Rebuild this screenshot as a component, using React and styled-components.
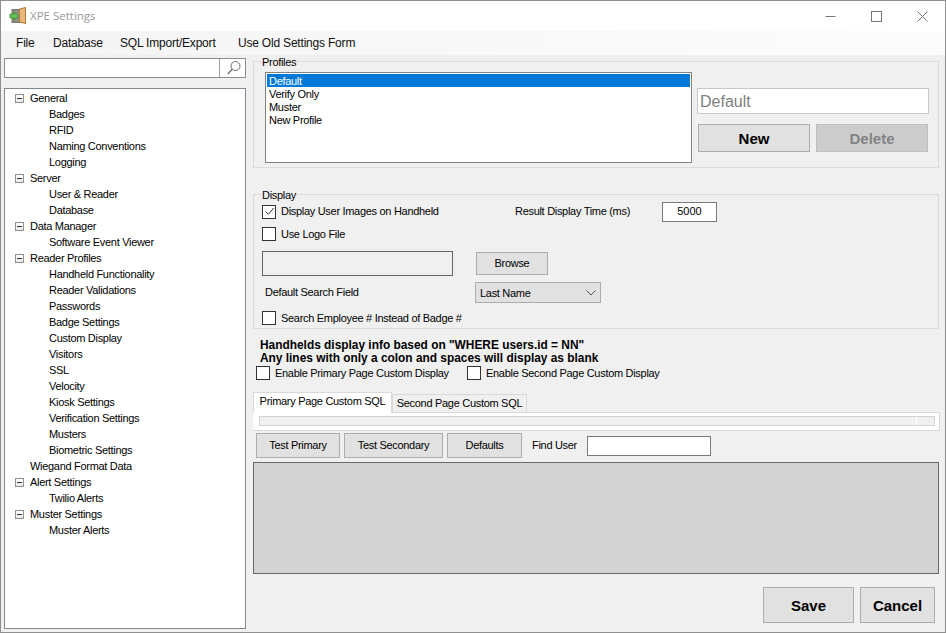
import styled, { createGlobalStyle } from "styled-components";

const GlobalStyle = createGlobalStyle`
  html, body {
    margin: 0;
    padding: 0;
    background: #f0f0f0;
  }
  * {
    box-sizing: border-box;
  }
`;

const treeItems = [
  { label: "General", level: 0, toggle: true },
  { label: "Badges", level: 1 },
  { label: "RFID", level: 1 },
  { label: "Naming Conventions", level: 1 },
  { label: "Logging", level: 1 },
  { label: "Server", level: 0, toggle: true },
  { label: "User & Reader", level: 1 },
  { label: "Database", level: 1 },
  { label: "Data Manager", level: 0, toggle: true },
  { label: "Software Event Viewer", level: 1 },
  { label: "Reader Profiles", level: 0, toggle: true },
  { label: "Handheld Functionality", level: 1 },
  { label: "Reader Validations", level: 1 },
  { label: "Passwords", level: 1 },
  { label: "Badge Settings", level: 1 },
  { label: "Custom Display", level: 1 },
  { label: "Visitors", level: 1 },
  { label: "SSL", level: 1 },
  { label: "Velocity", level: 1 },
  { label: "Kiosk Settings", level: 1 },
  { label: "Verification Settings", level: 1 },
  { label: "Musters", level: 1 },
  { label: "Biometric Settings", level: 1 },
  { label: "Wiegand Format Data", level: 0 },
  { label: "Alert Settings", level: 0, toggle: true },
  { label: "Twilio Alerts", level: 1 },
  { label: "Muster Settings", level: 0, toggle: true },
  { label: "Muster Alerts", level: 1 },
];

const profiles = ["Default", "Verify Only", "Muster", "New Profile"];
const menus = [
  { label: "File", width: 37 },
  { label: "Database", width: 67 },
  { label: "SQL Import/Export", width: 118 },
  { label: "Use Old Settings Form", width: 130 },
];

const AppIcon = () => (
  <svg width="18" height="18" viewBox="0 0 18 18">
    <rect x="3" y="2.5" width="8" height="13" fill="#8d9186" stroke="#5f6258" strokeWidth="0.8" />
    <path d="M10.5 2 L16.5 0.5 V16.5 L10.5 15 Z" fill="#e8b87c" stroke="#b5752c" strokeWidth="1" />
    <path d="M1 7 H5.5 V5 L9.5 9 L5.5 13 V11 H1 Z" fill="#62c254" stroke="#2f8a2a" strokeWidth="0.7" />
  </svg>
);

const SearchIcon = () => (
  <svg width="16" height="16" viewBox="0 0 16 16" fill="none" stroke="#6e6e6e" strokeWidth="1">
    <circle cx="10.5" cy="6" r="4.5" />
    <path d="M7.3 9.3 L2.8 14" strokeWidth="1.3" />
  </svg>
);

const CheckMark = () => (
  <svg width="11" height="11" viewBox="0 0 11 11" fill="none" stroke="#333" strokeWidth="1">
    <path d="M1.5 5.5 L4.3 8.3 L9.7 2" />
  </svg>
);

const Chevron = () => (
  <svg width="10" height="6" viewBox="0 0 10 6" fill="none" stroke="#555" strokeWidth="1">
    <path d="M0.5 0.5 L5 5 L9.5 0.5" />
  </svg>
);

const Check = ({ checked, label, width }) => (
  <CheckField $width={width}>
    <CheckBox>{checked && <CheckMark />}</CheckBox>
    <span>{label}</span>
  </CheckField>
);

const App = () => {
  return (
    <Window>
      <GlobalStyle />
      <TitleBar>
        <AppIcon />
        <WindowTitle>XPE Settings</WindowTitle>
        <Caption>
          <CaptionButton>
            <svg width="11" height="11" viewBox="0 0 11 11" stroke="#777" fill="none">
              <path d="M0.5 5.5 H10.5" />
            </svg>
          </CaptionButton>
          <CaptionButton>
            <svg width="11" height="11" viewBox="0 0 11 11" stroke="#777" fill="none">
              <rect x="0.5" y="0.5" width="10" height="10" />
            </svg>
          </CaptionButton>
          <CaptionButton>
            <svg width="11" height="11" viewBox="0 0 11 11" stroke="#777" fill="none">
              <path d="M0.5 0.5 L10.5 10.5 M10.5 0.5 L0.5 10.5" />
            </svg>
          </CaptionButton>
        </Caption>
      </TitleBar>

      <MenuBar>
        {menus.map((menu) => (
          <MenuItem key={menu.label} $width={menu.width}>
            {menu.label}
          </MenuItem>
        ))}
      </MenuBar>

      <Body>
        <Sidebar>
          <SearchBox>
            <SearchField />
            <SearchButton>
              <SearchIcon />
            </SearchButton>
          </SearchBox>
          <Tree>
            {treeItems.map((item) => (
              <TreeRow key={item.label} $level={item.level}>
                {item.toggle && (
                  <Toggle>
                    <i />
                  </Toggle>
                )}
                {item.label}
              </TreeRow>
            ))}
          </Tree>
        </Sidebar>

        <Content>
          <Group>
            <legend>Profiles</legend>
            <ProfilesRow>
              <ListBox>
                {profiles.map((profile, i) => (
                  <ListItem key={profile} $selected={i === 0}>
                    {profile}
                  </ListItem>
                ))}
              </ListBox>
              <ProfileEdit>
                <NameInput>Default</NameInput>
                <ProfileButtons>
                  <BoldButton $width={112} $height={28}>
                    New
                  </BoldButton>
                  <BoldButton $width={112} $height={28} $disabled>
                    Delete
                  </BoldButton>
                </ProfileButtons>
              </ProfileEdit>
            </ProfilesRow>
          </Group>

          <DisplayGroup>
            <legend>Display</legend>
            <FormRow $top={1} $height={21}>
              <Check checked label="Display User Images on Handheld" width={253} />
              <FieldLabel $width={147}>Result Display Time (ms)</FieldLabel>
              <NumberBox>5000</NumberBox>
            </FormRow>
            <FormRow $top={5} $height={14}>
              <Check label="Use Logo File" />
            </FormRow>
            <FormRow $top={10} $height={25}>
              <PathBox />
              <Button $width={72} $height={23} $left={23}>
                Browse
              </Button>
            </FormRow>
            <FormRow $top={6} $height={21}>
              <FieldLabel $width={210} $left={3}>
                Default Search Field
              </FieldLabel>
              <Select>
                <span>Last Name</span>
                <Chevron />
              </Select>
            </FormRow>
            <FormRow $top={8} $height={14}>
              <Check label="Search Employee # Instead of Badge #" />
            </FormRow>
          </DisplayGroup>

          <Note>
            Handhelds display info based on "WHERE users.id = NN"
            <br />
            Any lines with only a colon and spaces will display as blank
          </Note>

          <EnableRow>
            <Check label="Enable Primary Page Custom Display" width={211} />
            <Check label="Enable Second Page Custom Display" />
          </EnableRow>

          <TabStrip>
            <Tab $active>Primary Page Custom SQL</Tab>
            <Tab>Second Page Custom SQL</Tab>
          </TabStrip>
          <TabPanel>
            <SqlBar />
          </TabPanel>

          <ActionRow>
            <Button $width={84} $height={25}>
              Test Primary
            </Button>
            <Button $width={99} $height={25}>
              Test Secondary
            </Button>
            <Button $width={75} $height={25}>
              Defaults
            </Button>
            <FieldLabel $width={51} $left={6}>
              Find User
            </FieldLabel>
            <FindInput />
          </ActionRow>

          <ResultPanel />

          <Footer>
            <BoldButton $width={91} $height={36}>
              Save
            </BoldButton>
            <BoldButton $width={75} $height={36}>
              Cancel
            </BoldButton>
          </Footer>
        </Content>
      </Body>
    </Window>
  );
};

const Window = styled.div`
  width: 946px;
  height: 633px;
  overflow: hidden;
  display: flex;
  flex-direction: column;
  background: #f0f0f0;
  border: 1px solid #8f8f8f;
  color: #000;
  font-family: "Liberation Sans", Arial, sans-serif;
  font-size: 11px;
  line-height: 13px;
  letter-spacing: -0.3px;
`;

const TitleBar = styled.div`
  height: 30px;
  flex: none;
  display: flex;
  align-items: center;
  padding-left: 8px;
  background: #fff;
`;

const WindowTitle = styled.div`
  margin: -2px 0 0 3px;
  font-family: "Open Sans", sans-serif;
  font-size: 11.5px;
  letter-spacing: 0;
  color: #9a9a9a;
`;

const Caption = styled.div`
  margin-left: auto;
  display: flex;
`;

const CaptionButton = styled.div`
  width: 46px;
  height: 30px;
  display: flex;
  align-items: center;
  justify-content: center;
`;

const MenuBar = styled.div`
  height: 24px;
  flex: none;
  display: flex;
  align-items: center;
  padding-left: 15px;
  background: linear-gradient(90deg, #f4f4f4, #fafafa 70%, #fcfcfc);
`;

const MenuItem = styled.div`
  width: ${(props) => props.$width}px;
  flex: none;
  white-space: nowrap;
  font-size: 12px;
  letter-spacing: -0.2px;
  color: #111;
`;

const Body = styled.div`
  flex: 1;
  display: flex;
  min-height: 0;
`;

const Sidebar = styled.div`
  width: 245px;
  flex: none;
  padding: 3px 0 0 3px;
`;

const SearchBox = styled.div`
  display: flex;
  height: 20px;
  border: 1px solid #8c8c8c;
  background: #fff;
`;

const SearchField = styled.div`
  flex: 1;
  border-right: 1px solid #a0a0a0;
`;

const SearchButton = styled.div`
  width: 25px;
  display: flex;
  align-items: center;
  justify-content: center;
`;

const Tree = styled.div`
  height: 541px;
  margin-top: 10px;
  padding-top: 1px;
  background: #fff;
  border: 1px solid #828790;
`;

const TreeRow = styled.div`
  position: relative;
  height: 16px;
  line-height: 16px;
  white-space: nowrap;
  padding-left: ${(props) => (props.$level === 1 ? 44 : 25)}px;
`;

const Toggle = styled.span`
  position: absolute;
  left: 10px;
  top: 4px;
  width: 9px;
  height: 9px;
  border: 1px solid #919191;
  background: linear-gradient(#fff, #e6e6e6);
  i {
    position: absolute;
    left: 1px;
    top: 3px;
    width: 5px;
    height: 1px;
    background: #333;
  }
`;

const Content = styled.div`
  width: 687px;
  flex: none;
  margin-left: 7px;
`;

const Group = styled.fieldset`
  margin: 0;
  width: 686px;
  min-width: 0;
  padding: 0 0 4px 8px;
  border: 1px solid #dcdcdc;

  legend {
    padding: 0;
    height: 12px;
    line-height: 15px;
  }
`;

const ProfilesRow = styled.div`
  display: flex;
  margin: 5px 0 0 3px;
`;

const ListBox = styled.div`
  width: 427px;
  height: 91px;
  padding: 1px;
  background: #fff;
  border: 1px solid #828282;
`;

const ListItem = styled.div`
  height: 13px;
  line-height: 14px;
  padding-left: 2px;
  background: ${(props) => (props.$selected ? "#0078d7" : "transparent")};
  color: ${(props) => (props.$selected ? "#fff" : "#000")};
`;

const ProfileEdit = styled.div`
  margin: 16px 0 0 5px;
`;

const NameInput = styled.div`
  width: 232px;
  height: 26px;
  padding-left: 2px;
  line-height: 25px;
  font-size: 16px;
  letter-spacing: 0;
  color: #7f7f7f;
  background: #fff;
  border: 1px solid #c8c8c8;
`;

const ProfileButtons = styled.div`
  display: flex;
  gap: 6px;
  margin: 10px 0 0 1px;
`;

const Button = styled.div`
  width: ${(props) => props.$width}px;
  height: ${(props) => props.$height}px;
  margin-left: ${(props) => props.$left || 0}px;
  flex: none;
  display: flex;
  align-items: center;
  justify-content: center;
  background: #e1e1e1;
  border: 1px solid #adadad;
`;

const BoldButton = styled(Button)`
  font-weight: bold;
  font-size: 15px;
  letter-spacing: 0;
  background: ${(props) => (props.$disabled ? "#cccccc" : "#e1e1e1")};
  color: ${(props) => (props.$disabled ? "#838383" : "#000")};
  border-color: ${(props) => (props.$disabled ? "#bfbfbf" : "#adadad")};
`;

const DisplayGroup = styled(Group)`
  margin-top: 20px;
  padding: 0 0 3px 8px;
`;

const FormRow = styled.div`
  display: flex;
  align-items: center;
  margin-top: ${(props) => props.$top}px;
  height: ${(props) => props.$height}px;
`;

const CheckField = styled.label`
  display: flex;
  align-items: center;
  gap: 5px;
  flex: none;
  width: ${(props) => (props.$width ? `${props.$width}px` : "auto")};
`;

const CheckBox = styled.span`
  width: 14px;
  height: 14px;
  flex: none;
  display: flex;
  align-items: center;
  justify-content: center;
  background: #fff;
  border: 1px solid #333;
`;

const FieldLabel = styled.div`
  width: ${(props) => props.$width}px;
  margin-left: ${(props) => props.$left || 0}px;
  flex: none;
  white-space: nowrap;
`;

const NumberBox = styled.div`
  width: 55px;
  height: 20px;
  line-height: 17px;
  letter-spacing: 0;
  text-align: center;
  background: #fff;
  border: 1px solid #7a7a7a;
`;

const PathBox = styled.div`
  width: 191px;
  height: 25px;
  background: #f0f0f0;
  border: 1px solid #646464;
`;

const Select = styled.div`
  width: 126px;
  height: 21px;
  padding: 1px 4px 0;
  display: flex;
  align-items: center;
  justify-content: space-between;
  background: #e1e1e1;
  border: 1px solid #adadad;
`;

const Note = styled.div`
  margin: 10px 0 0 7px;
  font-size: 11.9px;
  font-weight: bold;
  letter-spacing: 0;
`;

const EnableRow = styled.div`
  display: flex;
  margin: 1px 0 0 3px;
`;

const TabStrip = styled.div`
  display: flex;
  align-items: flex-end;
  height: 20px;
  margin-top: 12px;
`;

const Tab = styled.div`
  position: relative;
  z-index: ${(props) => (props.$active ? 1 : 0)};
  height: ${(props) => (props.$active ? 21 : 18)}px;
  margin-bottom: ${(props) => (props.$active ? -1 : 0)}px;
  padding-bottom: ${(props) => (props.$active ? 4 : 0)}px;
  width: ${(props) => (props.$active ? 139 : 135)}px;
  display: flex;
  align-items: center;
  justify-content: center;
  white-space: nowrap;
  background: ${(props) => (props.$active ? "#fff" : "#f0f0f0")};
  border: 1px solid #d9d9d9;
  border-bottom: none;
`;

const TabPanel = styled.div`
  height: 19px;
  padding: 3px 4px 4px 6px;
  background: #fff;
  border: 1px solid #d9d9d9;
  border-left: none;
`;

const SqlBar = styled.div`
  position: relative;
  height: 10px;
  background: #f0f0f0;
  border: 1px solid #d4d4d4;

  &::after {
    content: "";
    position: absolute;
    top: 0;
    bottom: 0;
    right: 17px;
    width: 1px;
    background: #fff;
  }
`;

const ActionRow = styled.div`
  display: flex;
  align-items: center;
  gap: 4px;
  margin: 2px 0 0 3px;
`;

const FindInput = styled.div`
  width: 124px;
  height: 20px;
  background: #fff;
  border: 1px solid #7a7a7a;
`;

const ResultPanel = styled.div`
  width: 686px;
  height: 112px;
  margin-top: 4px;
  background: #d3d3d3;
  border: 1px solid #696969;
`;

const Footer = styled.div`
  display: flex;
  justify-content: flex-end;
  gap: 6px;
  margin-top: 13px;
  padding-right: 5px;
`;

export default App;
